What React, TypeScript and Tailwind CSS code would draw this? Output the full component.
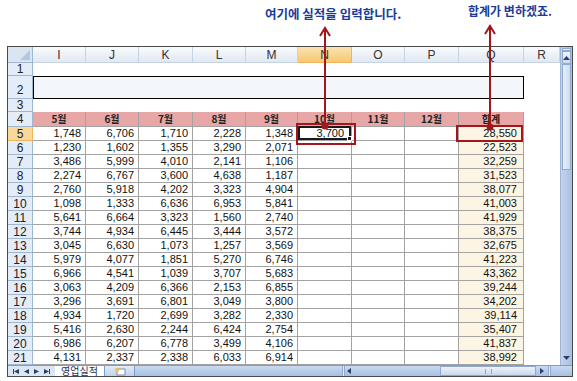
const cols = ["I", "J", "K", "L", "M", "N", "O", "P", "Q", "R"];
const months = ["5월", "6월", "7월", "8월", "9월", "10월", "11월", "12월", "합계"];

const rows: [number, string[], string][] = [
  [5, ["1,748", "6,706", "1,710", "2,228", "1,348"], "28,550"],
  [6, ["1,230", "1,602", "1,355", "3,290", "2,071"], "22,523"],
  [7, ["3,486", "5,999", "4,010", "2,141", "1,106"], "32,259"],
  [8, ["2,274", "6,767", "3,600", "4,638", "1,187"], "31,523"],
  [9, ["2,760", "5,918", "4,202", "3,323", "4,904"], "38,077"],
  [10, ["1,098", "1,333", "6,636", "6,953", "5,841"], "41,003"],
  [11, ["5,641", "6,664", "3,323", "1,560", "2,740"], "41,929"],
  [12, ["3,744", "4,934", "6,445", "3,444", "3,572"], "38,375"],
  [13, ["3,045", "6,630", "1,073", "1,257", "3,569"], "32,675"],
  [14, ["5,979", "4,077", "1,851", "5,270", "6,746"], "41,223"],
  [15, ["6,966", "4,541", "1,039", "3,707", "5,683"], "43,362"],
  [16, ["3,063", "4,209", "6,366", "2,153", "6,855"], "39,244"],
  [17, ["3,296", "3,691", "6,801", "3,049", "3,800"], "34,202"],
  [18, ["4,934", "1,720", "2,699", "3,282", "2,330"], "39,114"],
  [19, ["5,416", "2,630", "2,244", "6,424", "2,754"], "35,407"],
  [20, ["6,986", "6,207", "6,778", "3,499", "4,106"], "41,837"],
  [21, ["4,131", "2,337", "2,338", "6,033", "6,914"], "38,992"],
];

const rowHead = "flex items-center justify-center border-r border-b border-[#9eb6ce] bg-[#e4ecf7] text-[12px] text-[#222] leading-none";
const num = "flex items-center justify-end pr-[4px] border-r border-b border-[#a3a3a3] text-[11px] text-[#111] leading-none";

function Arrow({ x, top, bottom }: { x: number; top: number; bottom: number }) {
  return (
    <svg className="absolute left-0 top-0 pointer-events-none" width="577" height="381">
      <line x1={x} y1={top} x2={x} y2={bottom} stroke="#a3161a" strokeWidth="2" />
      <polyline points={`${x - 5},${top + 8} ${x},${top} ${x + 5},${top + 8}`} fill="none" stroke="#a3161a" strokeWidth="2" />
      <circle cx={x} cy={bottom} r="3.5" fill="#a3161a" />
    </svg>
  );
}

export default function App() {
  return (
    <div className="relative w-[577px] h-[381px] overflow-hidden bg-white font-['Liberation_Sans','Noto_Sans_CJK_KR',sans-serif]">
      <div className="pt-[46px] pl-[7px]">
        <div className="w-[566px] h-[331px] border border-[#4a4a4a] flex flex-col bg-white">
          <div className="flex h-[318px]">
            <div className="w-[552px] h-[318px] overflow-hidden grid grid-cols-[25px_53px_53px_54px_53px_52px_54px_53px_54px_65px_36px] grid-rows-[16px_13px_23px_13px_15px_repeat(17,14px)]">
              {/* header row */}
              <div className="relative border-r border-b border-[#9eb6ce] bg-[#dbe5f1]">
                <div className="absolute right-[2px] bottom-[2px] w-0 h-0 border-l-[10px] border-l-transparent border-b-[10px] border-b-[#b3c7e0]" />
              </div>
              {cols.map((c) =>
                c === "N" ? (
                  <div key={c} className="flex items-center justify-center border-r border-b border-[#f2b55b] bg-linear-to-b from-[#fbe3ae] to-[#f7c873] text-[12px] text-[#333]">
                    {c}
                  </div>
                ) : (
                  <div key={c} className="flex items-center justify-center border-r border-b border-[#c5d3e3] bg-linear-to-b from-[#f9fbfd] to-[#e1e8f1] text-[12px] text-[#333]">
                    {c}
                  </div>
                )
              )}
              {/* row 1 */}
              <div className={rowHead}>1</div>
              <div className="col-span-10" />
              {/* row 2 */}
              <div className={`${rowHead} items-end pb-[2px]`}>2</div>
              <div className="col-span-9 border border-black bg-[#f3f7fb]" />
              <div />
              {/* row 3 */}
              <div className={rowHead}>3</div>
              <div className="col-span-10" />
              {/* row 4 */}
              <div className={rowHead}>4</div>
              {months.map((m) => (
                <div key={m} className="flex items-center justify-center border-r border-b border-[#a3a3a3] bg-[#e8a7a7] text-[10px] font-bold text-[#222] font-['Noto_Sans_CJK_KR',sans-serif] leading-none">
                  {m}
                </div>
              ))}
              <div />
              {rows.map(([r, vals, total]) => (
                <div key={r} className="contents">
                  <div className={r === 5 ? `${rowHead} bg-[#f9d99b] border-[#f2b55b]` : rowHead}>{r}</div>
                  {vals.map((v, i) => (
                    <div key={i} className={num}>{v}</div>
                  ))}
                  {r === 5 ? (
                    <div className="relative border-r border-b border-[#a3a3a3]">
                      <div className="absolute inset-x-0 -top-px bottom-0 border-2 border-[#1a1a1a] flex items-center justify-end pr-[5px] text-[11px] text-[#111] leading-none">
                        3,700
                        <div className="absolute -right-[3px] -bottom-[3px] w-[5px] h-[5px] bg-[#1a1a1a] border border-white" />
                      </div>
                    </div>
                  ) : (
                    <div className="border-r border-b border-[#a3a3a3]" />
                  )}
                  <div className="border-r border-b border-[#a3a3a3]" />
                  <div className="border-r border-b border-[#a3a3a3]" />
                  <div className={`${num} bg-[#fdf5e3] pr-[6px]`}>{total}</div>
                  <div />
                </div>
              ))}
            </div>
            {/* vertical scrollbar */}
            <div className="w-[12px] h-[318px] flex flex-col bg-linear-to-r from-[#c3d4ec] to-[#a9c0e2] border-l border-[#9fb6d6]">
              <div className="h-[3px] mx-[1px] mt-[1px] bg-[#e9f0f9] border border-[#8fa9cf]" />
              <div className="h-[13px] mx-[1px] flex items-center justify-center bg-linear-to-b from-[#eef3fa] to-[#cddbef] border border-[#8fa9cf]">
                <svg width="7" height="4"><polygon points="0,4 3.5,0 7,4" fill="#2c3f66" /></svg>
              </div>
              <div className="h-[106px] mx-[1px] bg-linear-to-r from-[#e6eef9] to-[#cfdcf0] border border-[#8fa9cf]" />
              <div className="flex-1" />
              <div className="h-[13px] mx-[1px] mb-[1px] flex items-center justify-center">
                <svg width="7" height="4"><polygon points="0,0 3.5,4 7,0" fill="#2c3f66" /></svg>
              </div>
            </div>
          </div>
          {/* tab bar */}
          <div className="flex h-[11px] items-stretch bg-linear-to-b from-[#c9daf0] to-[#a6bfe3] border-t border-[#7f9dc9]">
            <div className="w-[47px] flex items-center justify-around px-[2px] bg-[#dbe6f4]">
              <svg width="6" height="5"><rect x="0" y="0" width="1" height="5" fill="#2c3f66" /><polygon points="6,0 1,2.5 6,5" fill="#2c3f66" /></svg>
              <svg width="5" height="5"><polygon points="5,0 0,2.5 5,5" fill="#2c3f66" /></svg>
              <svg width="5" height="5"><polygon points="0,0 5,2.5 0,5" fill="#2c3f66" /></svg>
              <svg width="6" height="5"><polygon points="0,0 5,2.5 0,5" fill="#2c3f66" /><rect x="5" y="0" width="1" height="5" fill="#2c3f66" /></svg>
            </div>
            <div className="w-[50px] flex items-center justify-center bg-white border-r border-[#7f9dc9] text-[10px] text-[#1f2f5a] leading-none font-['Noto_Sans_CJK_KR',sans-serif]">
              영업실적
            </div>
            <div className="w-[30px] flex items-center justify-center bg-linear-to-b from-[#e3ecf8] to-[#bed1ec] border-r border-[#7f9dc9]">
              <svg width="12" height="9"><rect x="3" y="2" width="8" height="6" fill="#fff" stroke="#7a8fb0" /><circle cx="3" cy="3" r="2" fill="#f3c04a" /></svg>
            </div>
            <div className="w-[207px]" />
            <div className="w-[214px] flex items-stretch">
              <div className="w-[3px] bg-[#e4ecf7] border-x border-[#8fa9cf]" />
              <div className="w-[8px] flex items-center justify-center">
                <svg width="4" height="6"><polygon points="4,0 0,3 4,6" fill="#2c3f66" /></svg>
              </div>
              <div className="w-[87px]" />
              <div className="w-[96px] flex items-center justify-center bg-linear-to-b from-[#edf2fa] to-[#c9d8ee] border border-[#8fa9cf]">
                <div className="w-[7px] h-[5px] border-x border-[#8fa9cf]" />
              </div>
              <div className="w-[12px] flex items-center justify-center">
                <svg width="4" height="6"><polygon points="0,0 4,3 0,6" fill="#2c3f66" /></svg>
              </div>
              <div className="w-[3px] bg-[#e4ecf7] border-x border-[#8fa9cf]" />
            </div>
          </div>
        </div>
      </div>

      {/* annotations */}
      <div className="absolute left-[265px] top-[8px] text-[12.5px] font-semibold text-[#1b3b9c] leading-none font-['Noto_Sans_CJK_KR',sans-serif]">
        여기에 실적을 입력합니다.
      </div>
      <div className="absolute left-[468px] top-[5px] text-[12px] font-semibold text-[#1b3b9c] leading-none font-['Noto_Sans_CJK_KR',sans-serif]">
        합계가 변하겠죠.
      </div>
      <div className="absolute left-[296px] top-[123px] w-[60px] h-[22px] border-2 border-[#a3161a]" />
      <div className="absolute left-[456px] top-[125px] w-[67px] h-[17px] border-2 border-[#a3161a]" />
      <Arrow x={325} top={28} bottom={126} />
      <Arrow x={490} top={26} bottom={127} />
    </div>
  );
}
